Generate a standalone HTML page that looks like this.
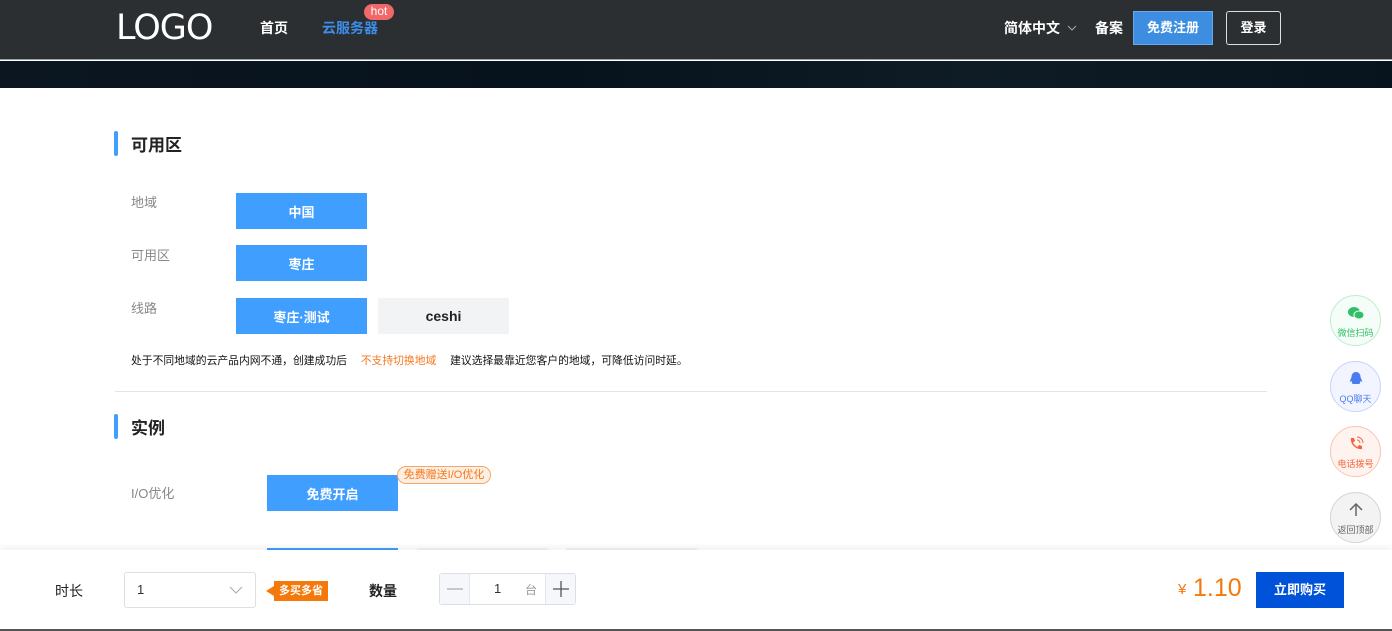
<!DOCTYPE html>
<html><head><meta charset="utf-8"><style>
*{margin:0;padding:0;box-sizing:border-box}
body{width:1392px;height:631px;overflow:hidden;background:#fff;font-family:"Liberation Sans","Noto Sans CJK SC",sans-serif;position:relative;color:#333}
.a{position:absolute}
.hd{left:0;top:0;width:1392px;height:60px;background:#2b2f32;border-bottom:1px solid #9aa0a6}
.bn{left:0;top:61px;width:1392px;height:27px;background:linear-gradient(90deg,#0b1620,#06121c 40%,#0f1c26 70%,#07131d)}
.btn{position:absolute;height:36px;width:131px;background:#409eff;color:#fff;font-size:13px;font-weight:bold;display:flex;align-items:center;justify-content:center}
.g{background:#f2f3f5;color:#222}
.lb{position:absolute;font-size:13px;color:#888}
.ci{position:absolute;left:1330px;width:51px;height:51px;border-radius:50%;font-size:9px;text-align:center;padding-top:30px}
</style></head><body>
<div class="a hd"></div>
<div class="a bn"></div>
<div class="a" style="left:116px;top:8px;font-size:35px;color:#fff;letter-spacing:-1px;font-family:'DejaVu Sans',sans-serif;line-height:40px">LOGO</div>
<div class="a" style="left:260px;top:18px;font-size:14px;color:#fff;font-weight:bold">首页</div>
<div class="a" style="left:322px;top:18px;font-size:14px;color:#3d8eea;font-weight:bold">云服务器</div>
<div class="a" style="left:364px;top:4px;width:30px;height:16px;border-radius:8px;background:#f06868;color:#fff;font-size:12px;text-align:center;line-height:15px">hot</div>
<div class="a" style="left:1004px;top:18px;font-size:14px;color:#fff;font-weight:bold">简体中文</div>
<svg class="a" style="left:1067px;top:25px" width="10" height="6"><path d="M1 1l4 4 4-4" stroke="#aaa" fill="none"/></svg>
<div class="a" style="left:1095px;top:18px;font-size:14px;color:#fff;font-weight:bold">备案</div>
<div class="a" style="left:1133px;top:11px;width:80px;height:34px;background:#3d8ee0;border:1px solid #6aa8ee;color:#fff;font-size:13px;font-weight:bold;text-align:center;line-height:32px">免费注册</div>
<div class="a" style="left:1226px;top:11px;width:55px;height:34px;border:1px solid #ddd;border-radius:3px;color:#fff;font-size:13px;font-weight:bold;text-align:center;line-height:32px">登录</div>

<div class="a" style="left:114px;top:131px;width:4px;height:25px;background:#409eff;border-radius:2px"></div>
<div class="a" style="left:131px;top:131px;font-size:17px;font-weight:bold;color:#222">可用区</div>
<div class="lb" style="left:131px;top:192px">地域</div>
<div class="btn" style="left:236px;top:193px">中国</div>
<div class="lb" style="left:131px;top:245px">可用区</div>
<div class="btn" style="left:236px;top:245px">枣庄</div>
<div class="lb" style="left:131px;top:298px">线路</div>
<div class="btn" style="left:236px;top:298px">枣庄·测试</div>
<div class="btn g" style="left:378px;top:298px;font-size:14px">ceshi</div>
<div class="a" style="left:131px;top:352px;font-size:10.8px;color:#111;white-space:nowrap">处于不同地域的云产品内网不通，创建成功后　 <span style="color:#f5781e">不支持切换地域</span> 　建议选择最靠近您客户的地域，可降低访问时延。</div>
<div class="a" style="left:115px;top:391px;width:1152px;height:1px;background:#e4e4e4"></div>
<div class="a" style="left:114px;top:414px;width:4px;height:25px;background:#409eff;border-radius:2px"></div>
<div class="a" style="left:131px;top:414px;font-size:17px;font-weight:bold;color:#222">实例</div>
<div class="lb" style="left:131px;top:483px">I/O优化</div>
<div class="btn" style="left:267px;top:475px">免费开启</div>
<div class="a" style="left:397px;top:466px;width:94px;height:18px;border:1px solid #f5a66a;background:#fdeee2;border-radius:9px;color:#f5781e;font-size:11px;text-align:center;line-height:16px">免费赠送I/O优化</div>
<div class="btn" style="left:267px;top:548px"></div>
<div class="btn g" style="left:417px;top:548px"></div>
<div class="btn g" style="left:566px;top:548px"></div>

<div class="ci" style="top:295px;background:#f4fdf7;border:1px solid #bfeccf;color:#2fbf65"><svg class="a" style="left:16px;top:10px" width="18" height="14"><ellipse cx="7" cy="6" rx="6" ry="5" fill="#2fbf65"/><ellipse cx="12" cy="9" rx="5" ry="4" fill="#2fbf65" stroke="#f4fdf7"/></svg>微信扫码</div>
<div class="ci" style="top:361px;background:#f2f5ff;border:1px solid #c6d3fb;color:#4a7cf0"><svg class="a" style="left:17px;top:9px" width="16" height="16"><path d="M8 1c3 0 4.5 2.5 4.5 5l2 5-2-1-1 3h-7l-1-3-2 1 2-5C3.5 3.5 5 1 8 1z" fill="#4a7cf0"/></svg>QQ聊天</div>
<div class="ci" style="top:426px;background:#fff3ef;border:1px solid #f9c4b0;color:#f5633a"><svg class="a" style="left:17px;top:9px" width="16" height="16"><path d="M3 2l3 0 1 3-2 1.5c1 2 2.5 3.5 4.5 4.5L11 9l3 1v3c-6 1-12-5-11-11z" fill="#f5633a"/><path d="M9 1a6 6 0 0 1 6 6M9 4a3 3 0 0 1 3 3" stroke="#f5633a" fill="none"/></svg>电话拨号</div>
<div class="ci" style="top:492px;background:#f3f3f3;border:1px solid #d4d4d4;color:#666"><svg class="a" style="left:18px;top:10px" width="14" height="14"><path d="M7 13V1M1 7l6-6 6 6" stroke="#666" stroke-width="1.5" fill="none"/></svg>返回顶部</div>

<div class="a" style="left:0;top:550px;width:1392px;height:79px;background:#fff;box-shadow:0 -3px 6px rgba(0,0,0,.06)"></div>
<div class="a" style="left:0;top:629px;width:1392px;height:2px;background:#555"></div>
<div class="a" style="left:55px;top:581px;font-size:14px;color:#222">时长</div>
<div class="a" style="left:124px;top:572px;width:132px;height:36px;border:1px solid #dcdfe6;border-radius:3px;font-size:13px;padding:9px 0 0 12px">1<svg class="a" style="left:104px;top:13px" width="14" height="8"><path d="M1 1l6 6 6-6" stroke="#aaa" fill="none"/></svg></div>
<div class="a" style="left:274px;top:581px;width:54px;height:20px;background:#f5780a;color:#fff;font-size:11px;font-weight:bold;text-align:center;line-height:20px">多买多省</div>
<div class="a" style="left:266px;top:586px;width:0;height:0;border-top:5px solid transparent;border-bottom:5px solid transparent;border-right:8px solid #f5780a"></div>
<div class="a" style="left:369px;top:581px;font-size:14px;color:#222;font-weight:bold">数量</div>
<div class="a" style="left:439px;top:573px;width:137px;height:32px;border:1px solid #dcdfe6;border-radius:3px;background:#fff"></div>
<div class="a" style="left:440px;top:574px;width:30px;height:30px;background:#f5f7fa;border-right:1px solid #e4e7ed"><svg class="a" style="left:7px;top:14px" width="16" height="2"><path d="M0 1h16" stroke="#999"/></svg></div>
<div class="a" style="left:545px;top:574px;width:30px;height:30px;background:#f5f7fa;border-left:1px solid #e4e7ed"><svg class="a" style="left:7px;top:7px" width="16" height="16"><path d="M0 8h16M8 0v16" stroke="#555" stroke-width="1.3"/></svg></div>
<div class="a" style="left:494px;top:581px;font-size:13px">1</div>
<div class="a" style="left:525px;top:581px;font-size:12px;color:#999">台</div>
<div class="a" style="left:1178px;top:581px;font-size:15px;color:#f5780a">¥</div>
<div class="a" style="left:1193px;top:574px;font-size:25px;color:#f5780a">1.10</div>
<div class="a" style="left:1256px;top:572px;width:88px;height:36px;background:#0052d9;color:#fff;font-size:13px;font-weight:bold;text-align:center;line-height:36px">立即购买</div>
</body></html>
